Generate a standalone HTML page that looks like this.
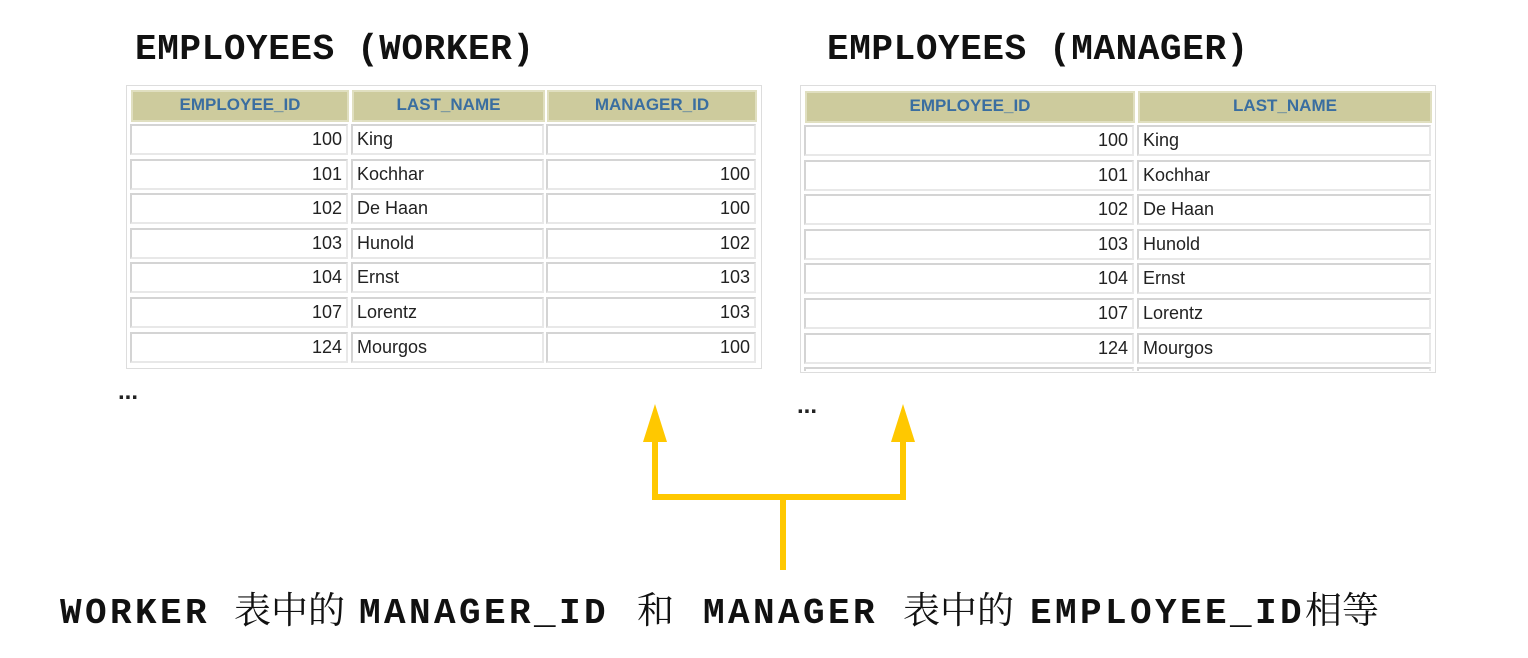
<!DOCTYPE html>
<html><head><meta charset="utf-8"><style>
body{margin:0;width:1528px;height:658px;background:#fff;position:relative;overflow:hidden}
.t{position:absolute;font-family:"Liberation Mono",monospace;font-weight:bold;font-size:36px;color:#111;line-height:1;white-space:pre;letter-spacing:0.6px}
.b{letter-spacing:3.4px;top:596px}
.c{position:absolute;font-family:"Liberation Serif","Noto Serif CJK SC",serif;font-size:37px;color:#111;line-height:1}
.tbl{position:absolute;border:1px solid #ddd;background:#fff;overflow:hidden}
.cell{position:absolute;box-sizing:border-box;border:2px solid #d4d4d4;border-right-color:#e8e8e8;border-bottom-color:#e8e8e8;font-family:"Liberation Sans",sans-serif;font-size:18px;color:#222;line-height:26px;padding:0 4px;white-space:nowrap}
.h{background:#cdcb9d;color:#3a6ea0;font-weight:bold;text-align:center;font-size:17px;border-color:#e0dfc0}
.r{text-align:right}
.dots{position:absolute;font-family:"Liberation Sans",sans-serif;font-size:24px;font-weight:bold;color:#222}
</style></head><body>
<div class="t" style="left:135px;top:32px">EMPLOYEES (WORKER)</div>
<div class="t" style="left:827px;top:32px">EMPLOYEES (MANAGER)</div>

<div class="tbl" style="left:126px;top:85px;width:634px;height:282px">
<div class="cell h" style="left:4px;top:4px;width:218px;height:32px">EMPLOYEE_ID</div>
<div class="cell h" style="left:225px;top:4px;width:193px;height:32px">LAST_NAME</div>
<div class="cell h" style="left:420px;top:4px;width:210px;height:32px">MANAGER_ID</div>
</div>
<div class="tbl" style="left:800px;top:85px;width:634px;height:286px">
<div class="cell h" style="left:4px;top:5px;width:330px;height:32px">EMPLOYEE_ID</div>
<div class="cell h" style="left:337px;top:5px;width:294px;height:32px">LAST_NAME</div>
</div>
<div id="rows"></div>
<script>
var L=[["100","King",""],["101","Kochhar","100"],["102","De Haan","100"],["103","Hunold","102"],["104","Ernst","103"],["107","Lorentz","103"],["124","Mourgos","100"]];
var h="";
for(var i=0;i<7;i++){var y=124+i*34.6;
h+='<div class="cell r" style="left:130px;top:'+y+'px;width:218px;height:31px">'+L[i][0]+'</div>';
h+='<div class="cell" style="left:351px;top:'+y+'px;width:193px;height:31px">'+L[i][1]+'</div>';
h+='<div class="cell r" style="left:546px;top:'+y+'px;width:210px;height:31px">'+L[i][2]+'</div>';
var y2=125+i*34.6;
h+='<div class="cell r" style="left:804px;top:'+y2+'px;width:330px;height:31px">'+L[i][0]+'</div>';
h+='<div class="cell" style="left:1137px;top:'+y2+'px;width:294px;height:31px">'+L[i][1]+'</div>';}
h+='<div class="cell" style="left:804px;top:367px;width:330px;height:4px;border-bottom:none"></div><div class="cell" style="left:1137px;top:367px;width:294px;height:4px;border-bottom:none"></div>';
document.getElementById("rows").innerHTML=h;
</script>
<div class="dots" style="left:118px;top:378px">...</div>
<div class="dots" style="left:797px;top:392px">...</div>

<svg style="position:absolute;left:0;top:0" width="1528" height="658">
<g fill="none" stroke="#ffc800" stroke-width="6">
<path d="M783 570 V497 M655 497 H906 M655 500 V436 M903 500 V436"/>
</g>
<path d="M655 404 L643 442 L667 442 Z M903 404 L891 442 L915 442 Z" fill="#ffc800"/>
</svg>

<div class="t b" style="left:60px">WORKER</div>
<div class="c" style="left:234px;top:593px">表中的</div>
<div class="t b" style="left:359px">MANAGER_ID</div>
<div class="c" style="left:637px;top:593px">和</div>
<div class="t b" style="left:703px">MANAGER</div>
<div class="c" style="left:903px;top:593px">表中的</div>
<div class="t b" style="left:1030px">EMPLOYEE_ID</div>
<div class="c" style="left:1305px;top:593px">相等</div>
</body></html>
